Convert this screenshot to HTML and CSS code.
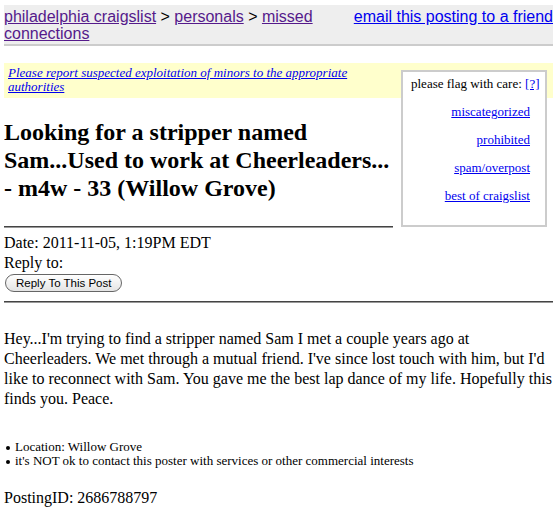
FILE: index.html
```html
<!DOCTYPE html>
<html>
<head>
<meta charset="utf-8">
<title>Looking for a stripper named Sam</title>
<link rel="stylesheet" href="styles.css">
</head>
<body>
<div class="bchead">
  <span class="ef"><a class="link" href="#">email this posting to a friend</a></span>
  <span class="crumbs"><a class="visited" href="#">philadelphia craigslist</a> &gt; <a class="visited" href="#">personals</a> &gt; <a class="visited" href="#">missed connections</a></span>
</div>

<div class="flags">
  <div class="flag-title">please flag with care: <a class="link" href="#">[?]</a></div>
  <div class="flag-list">
    <a class="link" href="#">miscategorized</a>
    <a class="link" href="#">prohibited</a>
    <a class="link" href="#">spam/overpost</a>
    <a class="link" href="#">best of craigslist</a>
  </div>
</div>

<div class="warn"><a class="link" href="#"><em>Please report suspected exploitation of minors to the appropriate authorities</em></a></div>

<h2 class="title">Looking for a stripper named Sam...Used to work at Cheerleaders... - m4w - 33 (Willow Grove)</h2>

<hr class="rule rule-narrow">

<div class="meta">
  <div>Date: 2011-11-05, 1:19PM EDT</div>
  <div>Reply to:</div>
  <button class="reply-btn" type="button">Reply To This Post</button>
</div>

<hr class="rule rule-full">

<div class="userbody">
  <p class="post">Hey...I'm trying to find a stripper named Sam I met a couple years ago at Cheerleaders. We met through a mutual friend. I've since lost touch with him, but I'd like to reconnect with Sam. You gave me the best lap dance of my life. Hopefully this finds you. Peace.</p>
  <ul class="blurbs">
    <li>Location: Willow Grove</li>
    <li>it's NOT ok to contact this poster with services or other commercial interests</li>
  </ul>
</div>

<div class="posting-id">PostingID: 2686788797</div>
</body>
</html>
```

FILE: styles.css
```css
html { background: #fff; }
body {
  margin: 5px 4px 4px 4px;
  font-family: "Liberation Serif", "Times New Roman", serif;
  font-size: 16px;
  color: #000;
}
a { text-decoration: underline; }
.link { color: #0000ee; }
.visited { color: #551a8b; }

.bchead {
  background: #eee;
  border-bottom: 2px solid #ccc;
  font-family: "Liberation Sans", Arial, sans-serif;
  font-size: 16px;
  line-height: 17px;
  padding: 3px 0 2px 0;
  margin-bottom: 17px;
}
.ef { float: right; }

.flags {
  float: right;
  background: #fff;
  border: 2px solid #ccc;
  width: 126px;
  padding: 4px 8px 22px 8px;
  margin: 7px 6px 8px 8px;
  font-size: 13px;
  line-height: 15px;
}
.flag-title { white-space: nowrap; }
.flag-list {
  display: flex;
  flex-direction: column;
  align-items: flex-end;
  gap: 13px;
  margin-top: 13px;
  padding-right: 7px;
}

.warn {
  background: #ffc;
  font-size: 13px;
  line-height: 14px;
  padding: 3px 4px 4px 4px;
}

.title {
  font-size: 24px;
  line-height: 28px;
  font-weight: bold;
  margin: 20px 0 24px 0;
}

.rule {
  height: 0;
  border: 0;
  border-top: 1px solid #444;
  border-bottom: 1px solid #999;
  margin: 0;
}
.rule-narrow { overflow: hidden; }
.rule-full { clear: both; margin-top: 1px; }

.meta {
  line-height: 20px;
  padding-top: 5px;
  padding-bottom: 8px;
  display: flex;
  flex-direction: column;
  align-items: flex-start;
}
.reply-btn {
  margin-top: 1px;
  margin-left: 1px;
  font-family: "Liberation Sans", Arial, sans-serif;
  font-size: 11.5px;
  line-height: 14px;
  padding: 1px 10px 1px 10px;
  border: 1px solid #666;
  border-radius: 9px;
  background: linear-gradient(#ffffff, #e4e4e4);
  color: #000;
}

.userbody { margin-top: 26px; }
.post {
  margin: 0;
  line-height: 20px;
}
.blurbs {
  margin: 31px 0 0 0;
  padding: 0;
  list-style: none;
  font-size: 13px;
  line-height: 14px;
}
.blurbs li {
  display: flex;
  align-items: center;
}
.blurbs li::before {
  content: "";
  flex: none;
  width: 4px;
  height: 4px;
  border-radius: 50%;
  background: #000;
  margin: 1px 5px 0 2px;
}
.posting-id {
  margin-top: 20px;
  line-height: 20px;
}
```
